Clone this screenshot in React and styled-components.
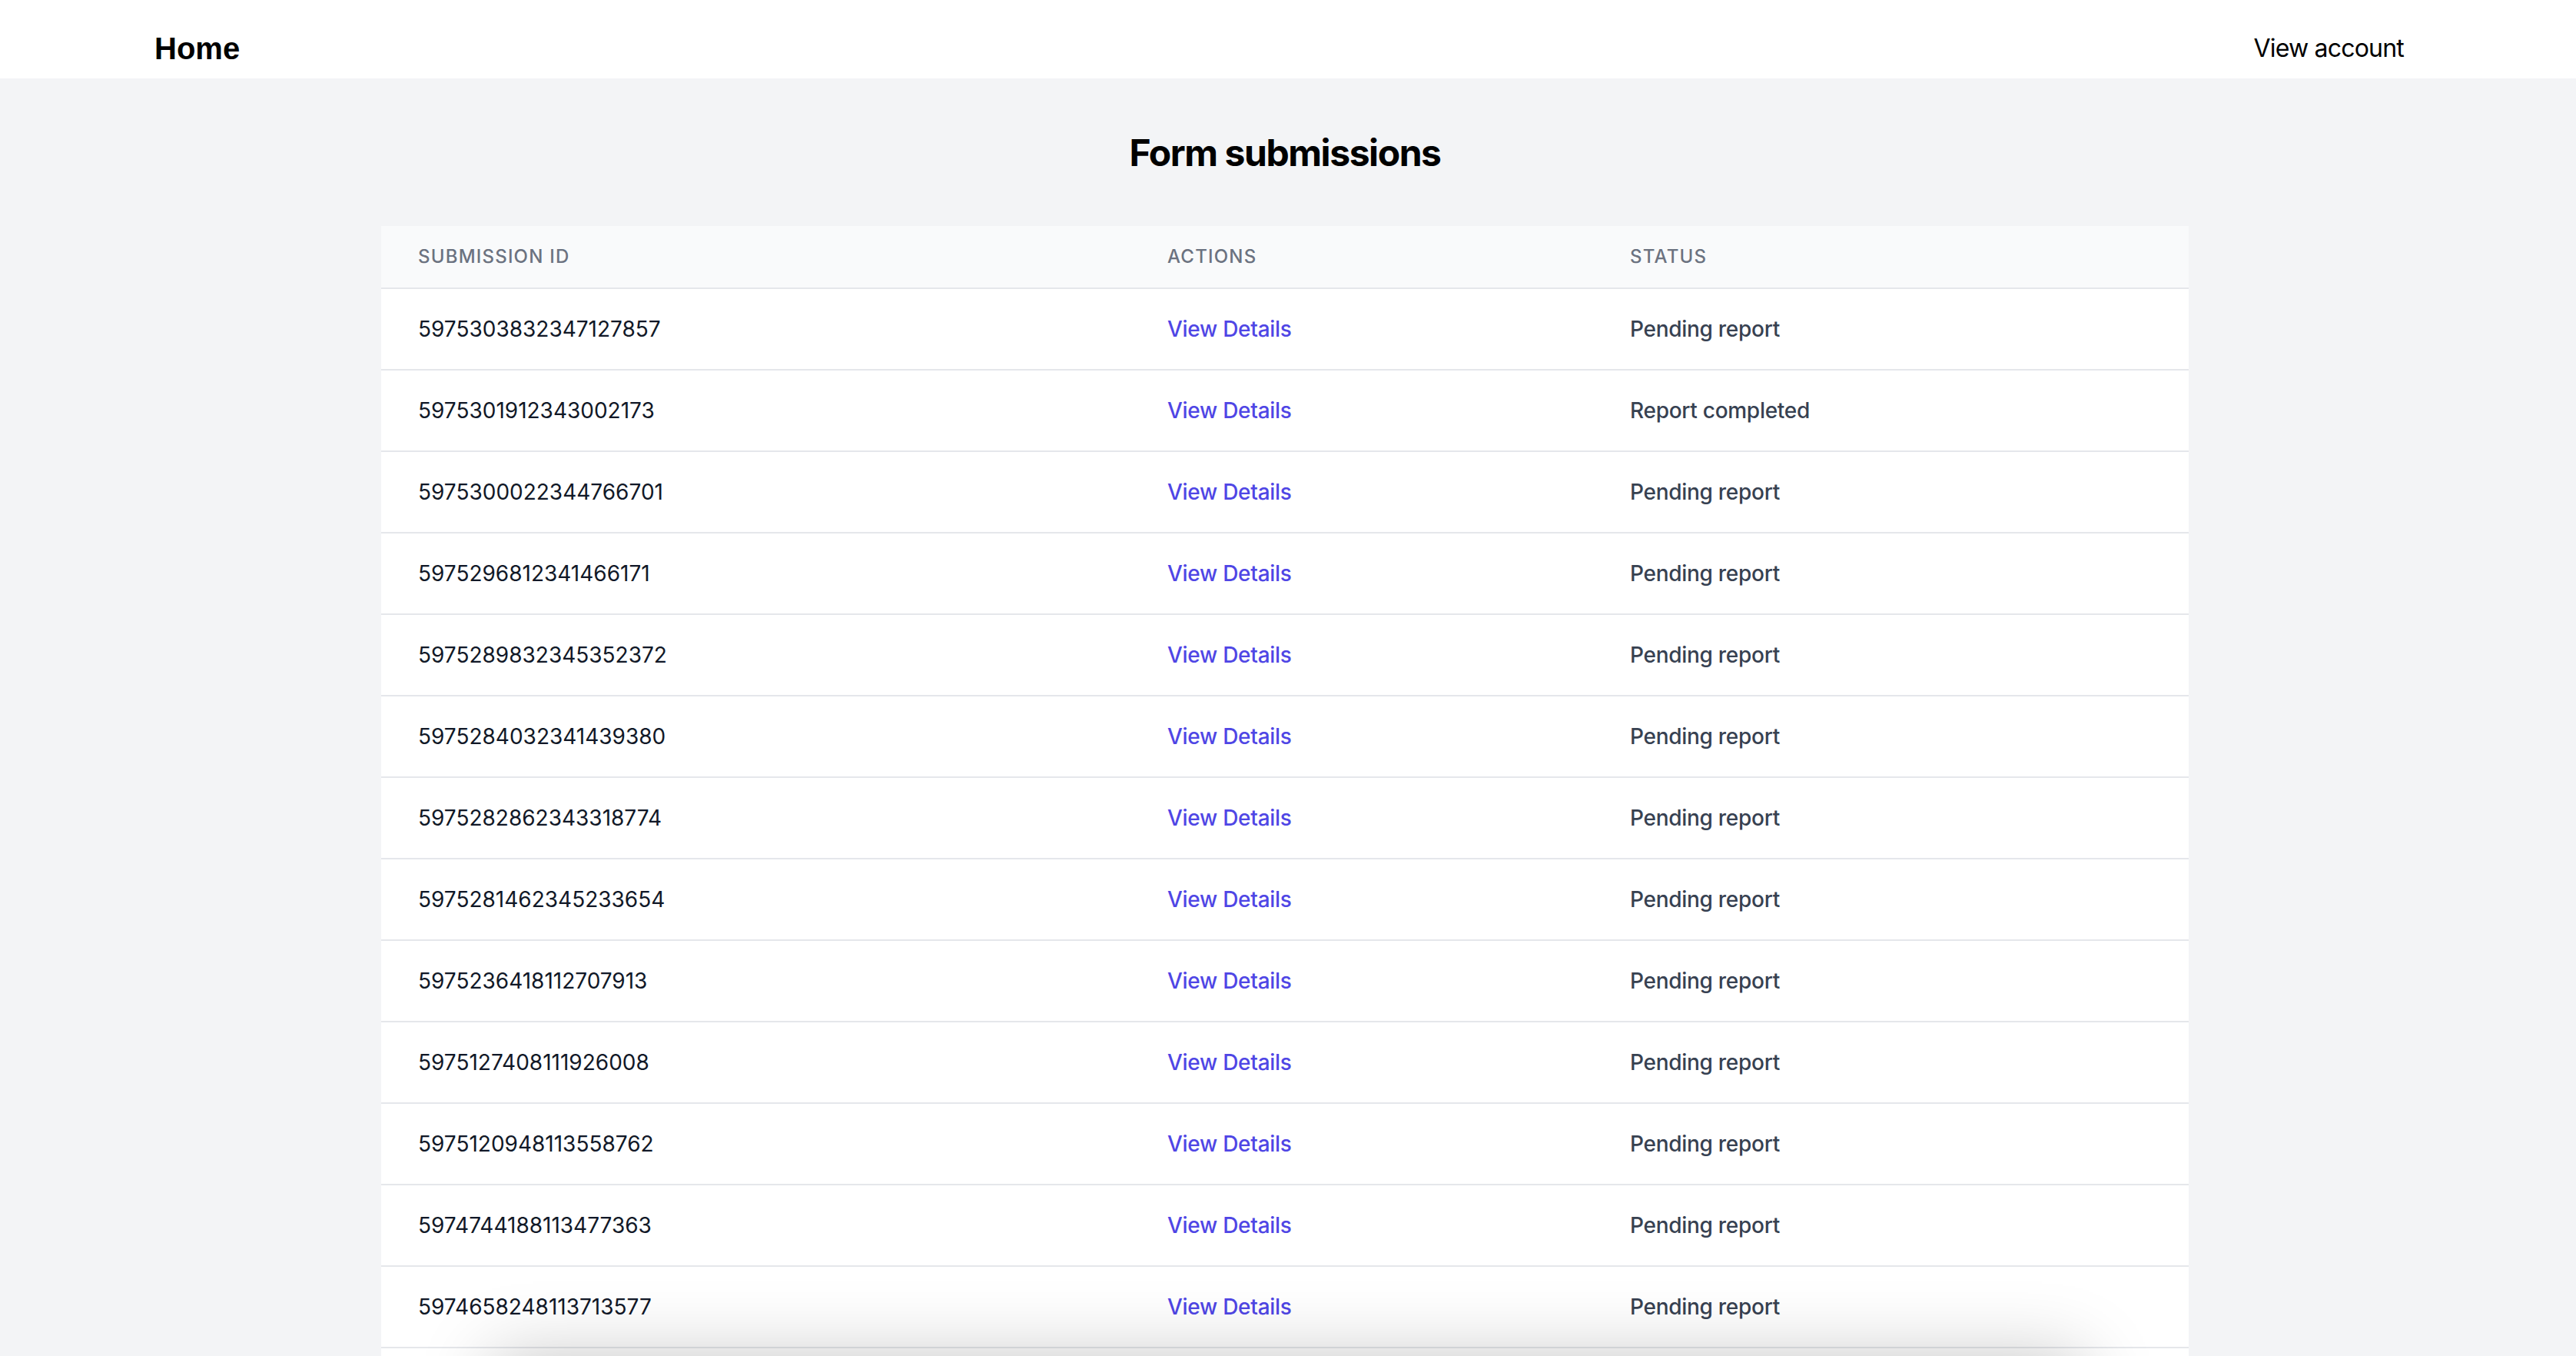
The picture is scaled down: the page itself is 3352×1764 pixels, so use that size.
import React from "react";
import styled, { createGlobalStyle } from "styled-components";

const GlobalStyle = createGlobalStyle`
  html, body {
    margin: 0;
    padding: 0;
    background-color: #f3f4f6;
    font-family: Inter, "Noto Sans", sans-serif;
    -webkit-font-smoothing: antialiased;
  }
`;

const TopBar = styled.header`
  box-sizing: border-box;
  height: 102px;
  padding: 24px 224px 0 201px;
  background-color: #ffffff;
  display: flex;
  align-items: center;
  justify-content: space-between;
`;

const HomeLink = styled.a`
  font-family: "Liberation Sans", Arial, sans-serif;
  font-weight: 700;
  font-size: 40px;
  line-height: 48px;
  color: #000000;
  text-decoration: none;
`;

const AccountLink = styled.a`
  font-family: Inter, sans-serif;
  font-size: 32px;
  line-height: 48px;
  letter-spacing: -0.025em;
  color: #000000;
  text-decoration: none;
`;

const Main = styled.main`
  padding: 65px 504px 0 496px;
`;

const Title = styled.h1`
  margin: 0 0 63px;
  text-align: center;
  font-size: 48px;
  line-height: 64px;
  font-weight: 700;
  letter-spacing: -0.03em;
  color: #000000;
`;

const Table = styled.div`
  background-color: #ffffff;
  display: flex;
  flex-direction: column;
`;

const Row = styled.div`
  display: grid;
  grid-template-columns: 975px 602px 1fr;
  border-bottom: 2px solid #e5e7eb;
  background-color: ${({ head }) => (head ? "#f9fafb" : "#ffffff")};
`;

const HeadCell = styled.div`
  padding: 24px 48px;
  font-size: 24px;
  line-height: 32px;
  font-weight: 500;
  letter-spacing: 0.05em;
  text-transform: uppercase;
  color: #6b7280;
`;

const Cell = styled.div`
  padding: 32px 48px;
  font-size: 28px;
  line-height: 40px;
  white-space: nowrap;
  font-weight: ${({ weight }) => weight || 400};
  letter-spacing: ${({ tight }) => (tight ? "-0.01em" : "normal")};
  color: ${({ color }) => color || "#111827"};
`;

const DetailsLink = styled.a`
  color: #4f46e5;
  font-weight: 500;
  letter-spacing: -0.01em;
  text-decoration: none;
`;

const PeekPanel = styled.div`
  position: fixed;
  top: 100vh;
  left: 640px;
  width: 2070px;
  height: 300px;
  background-color: #ffffff;
  box-shadow: 0 0 90px 0 rgba(0, 0, 0, 0.22);
`;

const submissions = [
  { id: "5975303832347127857", status: "Pending report" },
  { id: "5975301912343002173", status: "Report completed" },
  { id: "5975300022344766701", status: "Pending report" },
  { id: "5975296812341466171", status: "Pending report" },
  { id: "5975289832345352372", status: "Pending report" },
  { id: "5975284032341439380", status: "Pending report" },
  { id: "5975282862343318774", status: "Pending report" },
  { id: "5975281462345233654", status: "Pending report" },
  { id: "5975236418112707913", status: "Pending report" },
  { id: "5975127408111926008", status: "Pending report" },
  { id: "5975120948113558762", status: "Pending report" },
  { id: "5974744188113477363", status: "Pending report" },
  { id: "5974658248113713577", status: "Pending report" },
  { id: "5974611078112385420", status: "Pending report" },
  { id: "5974598128114290165", status: "Pending report" },
  { id: "5974402938113021736", status: "Pending report" }
];

const App = () => (
  <>
    <GlobalStyle />
    <TopBar>
      <HomeLink href="#">Home</HomeLink>
      <AccountLink href="#">View account</AccountLink>
    </TopBar>
    <Main>
      <Title>Form submissions</Title>
      <Table>
        <Row head>
          <HeadCell>Submission ID</HeadCell>
          <HeadCell>Actions</HeadCell>
          <HeadCell>Status</HeadCell>
        </Row>
        {submissions.map(item => (
          <Row key={item.id}>
            <Cell>{item.id}</Cell>
            <Cell>
              <DetailsLink href="#">View Details</DetailsLink>
            </Cell>
            <Cell color="#374151" weight={500} tight>
              {item.status}
            </Cell>
          </Row>
        ))}
      </Table>
    </Main>
    <PeekPanel />
  </>
);

export default App;
